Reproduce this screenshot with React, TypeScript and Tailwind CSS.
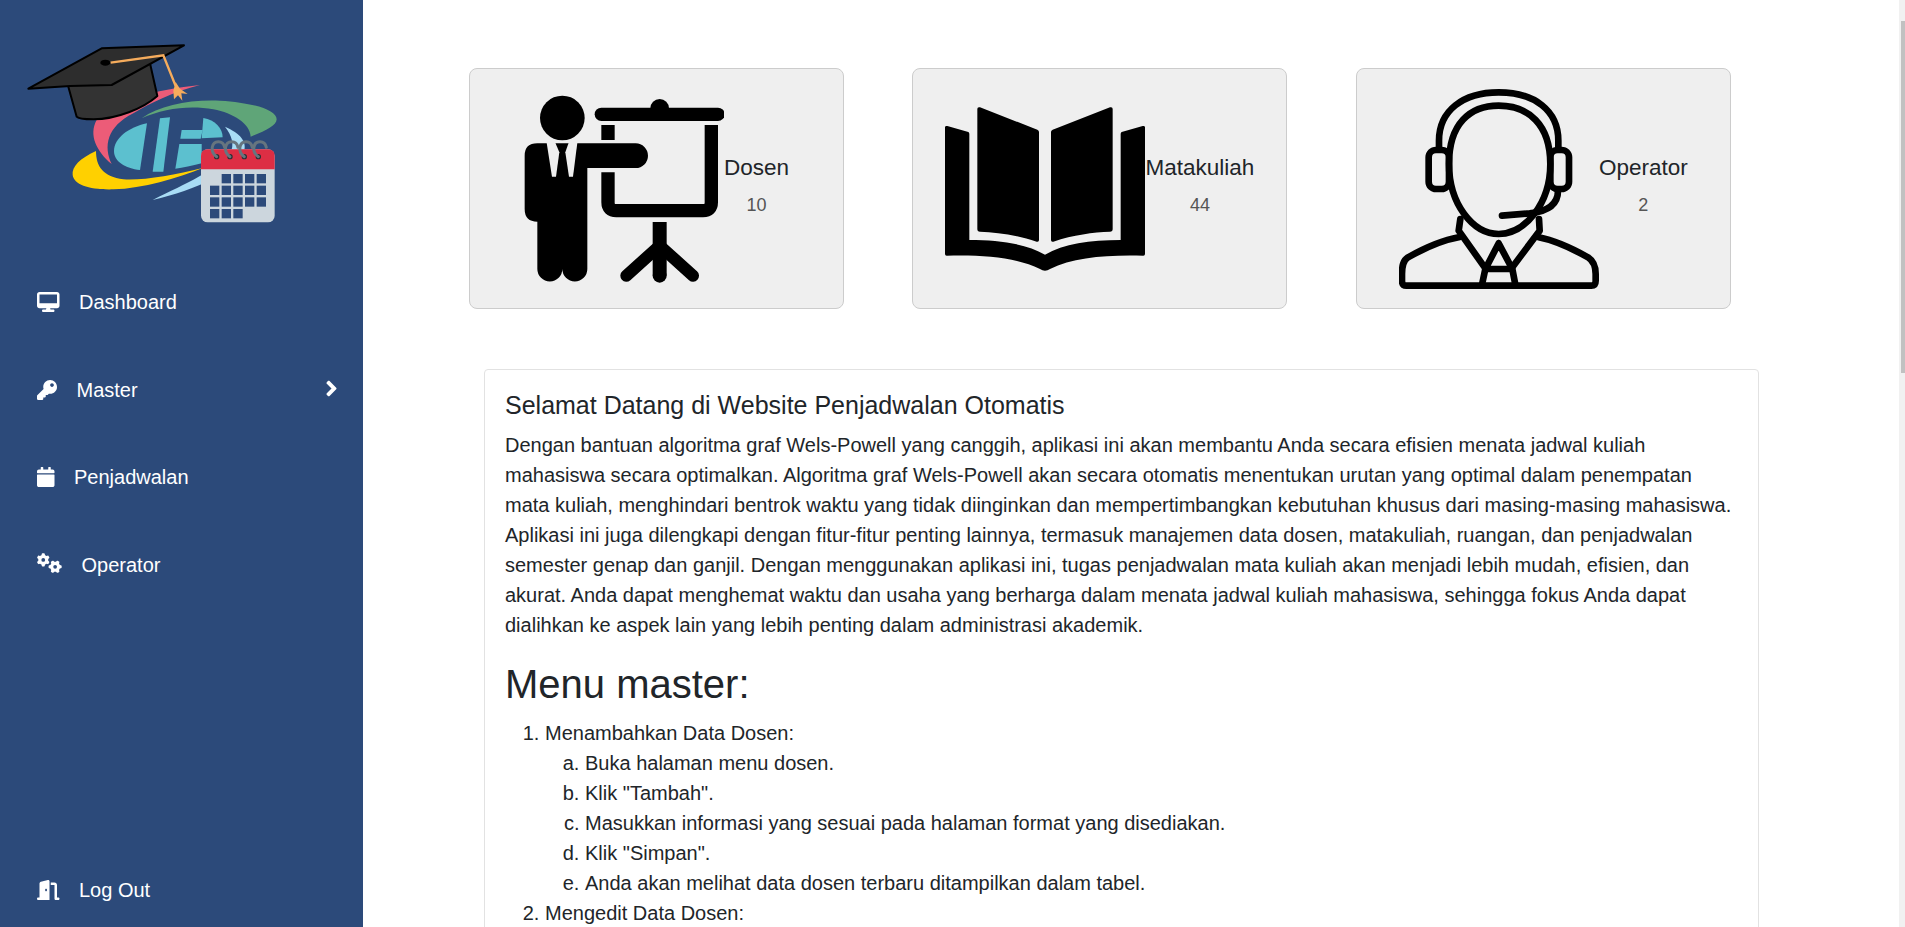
import { FaKey, FaCalendar, FaAngleRight } from "react-icons/fa";
import { FaDesktop, FaDoorOpen, FaGears } from "react-icons/fa6";
import type { ReactNode } from "react";

const SIDE = "#2c4a7a";
const CARD = "#efefef";

function Logo() {
  const cols = [630, 665, 700, 735, 770];
  const rows: number[][] = [
    [1, 2, 3, 4],
    [0, 1, 2, 3, 4],
    [0, 1, 2, 3, 4],
    [0, 1, 2],
  ];
  return (
    <svg viewBox="0 0 1080 660" className="block w-[360px] h-[220px]">
      <path d="M600 195C470 210 330 240 290 300C265 345 290 395 335 432C310 380 320 320 400 280C450 250 520 215 600 195Z" fill="#ec5c78" />
      <path d="M425 295C480 255 570 238 660 242C760 248 830 270 830 298C830 318 790 335 752 350C750 310 700 280 640 268C570 255 490 265 425 295Z" fill="#5fa578" />
      <path d="M288 393C240 415 215 440 218 465C222 495 270 510 340 508C430 505 530 475 610 443C520 465 430 482 370 478C310 470 288 440 288 393Z" fill="#ffd000" />
      <path d="M675 320C720 340 745 365 730 400C705 455 590 510 458 540C560 490 650 450 690 400C705 375 695 345 675 320Z" fill="#a8dcf5" />
      <path d="M441 310L420 450C375 445 342 425 342 393C342 355 385 322 441 310Z" fill="#5cc0cf" />
      <path d="M480 295L510 292L490 455L458 455Z" fill="#5cc0cf" />
      <path d="M610 294C645 300 668 325 668 352L605 355Z" fill="#5cc0cf" />
      <path d="M545 330H608L602 356H541Z" fill="#5cc0cf" />
      <path d="M538 372H605V430C575 438 550 443 526 446Z" fill="#5cc0cf" />
      <path d="M205 200L230 290C235 297 250 298 280 298C350 298 430 265 472 228L450 130L300 140Z" fill="#333333" stroke="#000" strokeWidth="6" strokeLinejoin="round" />
      <path d="M85 206L305 85L552 76L335 195L210 198Z" fill="#2d2d2d" stroke="#000" strokeWidth="6" strokeLinejoin="round" />
      <ellipse cx="316" cy="128" rx="15" ry="9" fill="#000" />
      <path d="M332 128L490 106L527 198" fill="none" stroke="#f6ac5c" strokeWidth="7" />
      <path d="M527 186L540 206L563 222L544 220L547 242L534 226L522 238L520 212Z" fill="#f6ac5c" />
      <rect x="603" y="388" width="221" height="219" rx="20" fill="#ccd6dd" />
      <path d="M603 448V408Q603 388 623 388H804Q824 388 824 408V448Z" fill="#dd2e44" />
      {[650, 690, 733, 775].map((x) => (
        <g key={x}>
          <circle cx={x} cy="410" r="8" fill="#292f33" />
          <path d={`M${x} 410C${x - 22} 395 ${x - 15} 365 ${x + 5} 365C${x + 18} 365 ${x + 22} 372 ${x + 24} 382`} fill="none" stroke="#66757f" strokeWidth="9" strokeLinecap="round" />
        </g>
      ))}
      {rows.map((r, i) =>
        r.map((c) => <rect key={`${i}-${c}`} x={cols[c]} y={462 + i * 35} width="28" height="28" fill={SIDE} />)
      )}
    </svg>
  );
}

function DosenIcon() {
  return (
    <svg viewBox="190 85 600 600" className="w-[200px] h-[200px] shrink-0">
      <circle cx="305" cy="172" r="67" fill="#000" />
      <path d="M192 285Q192 248 230 248H525A37 37 0 0 1 525 322H380V625A37 37 0 0 1 305 625A37 37 0 0 1 230 625V483Q192 483 192 445Z" fill="#000" />
      <path d="M258 246H284L296 275L286 348H274Z" fill={CARD} />
      <path d="M350 246H324L314 275L325 348H337Z" fill={CARD} />
      <rect x="402" y="141" width="390" height="40" rx="20" fill="#000" />
      <path d="M569 143A28 28 0 0 1 625 143Z" fill="#000" />
      <rect x="422" y="193" width="40" height="45" fill="#000" />
      <path d="M442 335V425Q442 450 467 450H727Q752 450 752 425V193" fill="none" stroke="#000" strokeWidth="40" />
      <path d="M597 484V645" fill="none" stroke="#000" strokeWidth="42" />
      <circle cx="597" cy="645" r="21" fill="#000" />
      <path d="M597 555L497 645M597 555L697 645" fill="none" stroke="#000" strokeWidth="36" strokeLinecap="round" />
    </svg>
  );
}

function BookIcon() {
  return (
    <svg viewBox="135 85 600 600" className="w-[200px] h-[200px] shrink-0">
      <path d="M135 200Q135 195 142 196L205 214Q208 216 208 220V538C300 538 380 550 435 582C490 550 570 538 662 538V220Q662 216 665 214L728 196Q735 195 735 200V580Q735 585 730 585C620 582 520 590 450 625Q435 635 420 625C350 590 250 582 140 585Q135 585 135 580Z" fill="#000" />
      <path d="M232 145Q232 138 240 140L412 207Q417 209 417 214V538Q417 545 410 543C350 522 290 515 240 513Q232 513 232 505Z" fill="#000" />
      <path d="M638 145Q638 138 630 140L458 207Q453 209 453 214V538Q453 545 460 543C520 522 580 515 630 513Q638 513 638 505Z" fill="#000" />
    </svg>
  );
}

function OperatorIcon() {
  return (
    <svg viewBox="178 85 600 600" className="w-[200px] h-[200px] shrink-0" fill="none" stroke="#000" strokeWidth="20" strokeLinecap="round" strokeLinejoin="round">
      <path d="M298 262V240C298 150 370 95 477 95C585 95 656 150 656 240V262" />
      <path d="M328 310C328 190 390 135 477 135C565 135 632 190 632 310C632 430 555 520 477 520C400 520 328 430 328 310Z" />
      <rect x="267" y="268" width="61" height="117" rx="22" />
      <rect x="632" y="268" width="56" height="117" rx="22" />
      <path d="M655 390C655 430 625 452 570 458L487 465" />
      <path d="M362 475L357 510L435 620M598 475L600 510L518 620" />
      <path d="M477 548L437 625L427 672M477 548L518 625L527 672M440 625H515" />
      <path d="M357 530C300 540 250 565 205 590C190 600 187 615 187 640V660Q187 675 200 675H755Q768 675 768 660V640C768 615 760 600 745 590C700 565 650 540 597 530" />
    </svg>
  );
}

function StatCard({ icon, title, value }: { icon: ReactNode; title: string; value: string }) {
  return (
    <div className="w-[375px] h-[241px] shrink-0 flex items-center justify-center rounded-lg border border-[#cccccc] bg-[#efefef]">
      {icon}
      <div className="flex flex-col items-center mb-[7px]">
        <span className="text-[22.5px] leading-[26px] text-[#212529]">{title}</span>
        <span className="mt-[13px] text-[18px] leading-[22px] text-[#555555]">{value}</span>
      </div>
    </div>
  );
}

function NavItem({ icon, label, right }: { icon: ReactNode; label: string; right?: ReactNode }) {
  return (
    <div className="h-[88px] flex items-center pl-[37px] pr-[26px] gap-[19.5px] text-white text-[20px]">
      {icon}
      <span className="leading-none">{label}</span>
      {right}
    </div>
  );
}

export default function App() {
  return (
    <div className="relative flex h-[927px] overflow-hidden bg-white font-['Liberation_Sans',Arial,sans-serif] text-[#212529]">
      <aside className="w-[363px] shrink-0 flex flex-col bg-[#2c4a7a]">
        <div className="pt-[20px] h-[258px]">
          <Logo />
        </div>
        <nav className="flex flex-col">
          <NavItem icon={<FaDesktop className="w-[22.5px] h-[20px]" />} label="Dashboard" />
          <div className="-mb-px">
            <NavItem
              icon={<FaKey className="w-[20px] h-[20px]" />}
              label="Master"
              right={<FaAngleRight size={25} className="ml-auto -mt-[4px] -mr-[7px]" />}
            />
          </div>
          <NavItem icon={<FaCalendar className="w-[17.5px] h-[20px]" />} label="Penjadwalan" />
          <NavItem icon={<FaGears className="w-[25px] h-[20px] -translate-y-[2px]" />} label="Operator" />
        </nav>
        <div className="mt-auto mb-[-7px]">
          <NavItem icon={<FaDoorOpen className="w-[22.5px] h-[20px]" />} label="Log Out" />
        </div>
      </aside>

      <main className="flex-1 min-w-0 pt-[68px]">
        <div className="flex gap-[68.4px] pl-[106px]">
          <StatCard icon={<DosenIcon />} title="Dosen" value="10" />
          <StatCard icon={<BookIcon />} title="Matakuliah" value="44" />
          <StatCard icon={<OperatorIcon />} title="Operator" value="2" />
        </div>

        <section className="mt-[60px] ml-[121px] w-[1275px] rounded border border-[#e2e2e2] p-[20px] text-[20px] leading-[30px]">
          <h5 className="text-[25px] leading-[30px] mb-[10px]">Selamat Datang di Website Penjadwalan Otomatis</h5>
          <p className="mb-[20px]">
            Dengan bantuan algoritma graf Wels-Powell yang canggih, aplikasi ini akan membantu Anda secara efisien menata jadwal kuliah mahasiswa secara optimalkan. Algoritma graf Wels-Powell akan secara otomatis menentukan urutan yang optimal dalam penempatan mata kuliah, menghindari bentrok waktu yang tidak diinginkan dan mempertimbangkan kebutuhan khusus dari masing-masing mahasiswa. Aplikasi ini juga dilengkapi dengan fitur-fitur penting lainnya, termasuk manajemen data dosen, matakuliah, ruangan, dan penjadwalan semester genap dan ganjil. Dengan menggunakan aplikasi ini, tugas penjadwalan mata kuliah akan menjadi lebih mudah, efisien, dan akurat. Anda dapat menghemat waktu dan usaha yang berharga dalam menata jadwal kuliah mahasiswa, sehingga fokus Anda dapat dialihkan ke aspek lain yang lebih penting dalam administrasi akademik.
          </p>
          <h1 className="text-[40px] leading-[48px] mb-[10px]">Menu master:</h1>
          <ol className="list-decimal pl-[40px]">
            <li>
              Menambahkan Data Dosen:
              <ol className="list-[lower-alpha] pl-[40px]">
                <li>Buka halaman menu dosen.</li>
                <li>Klik "Tambah".</li>
                <li>Masukkan informasi yang sesuai pada halaman format yang disediakan.</li>
                <li>Klik "Simpan".</li>
                <li>Anda akan melihat data dosen terbaru ditampilkan dalam tabel.</li>
              </ol>
            </li>
            <li>Mengedit Data Dosen:</li>
          </ol>
        </section>
      </main>

      <div className="absolute right-0 top-0 bottom-0 w-[6px] bg-[#f1f1f1]">
        <div className="absolute right-0 top-[21px] h-[352px] w-[4px] bg-[#c1c1c1]" />
      </div>
    </div>
  );
}
